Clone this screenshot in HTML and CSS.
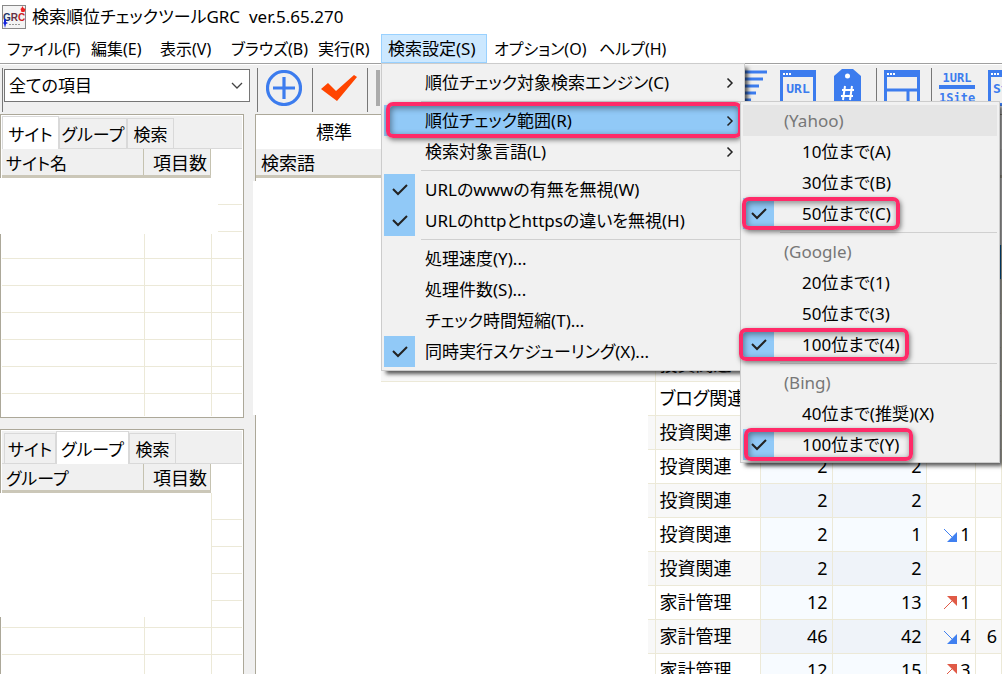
FILE: index.html
```html
<!DOCTYPE html>
<html lang="ja">
<head>
<meta charset="utf-8">
<title>検索順位チェックツールGRC</title>
<link rel="stylesheet" href="styles.css">
</head>
<body>
<div class="app">
  <header class="titlebar">
    <svg class="logo" viewBox="0 0 24 24" aria-hidden="true"><rect x=".5" y=".5" width="23" height="23" fill="#f4f4f4" stroke="#888"/><text x="12" y="16" text-anchor="middle" font-family="Liberation Sans" font-size="10" font-weight="bold"><tspan fill="#236">G</tspan><tspan fill="#643044">R</tspan><tspan fill="#c22">C</tspan></text><path d="M20.500 1l1 2 2 1-1 3h-3l-1-3 1-1z" fill="#e22"/><path d="M2 14h2v3l2 1-2 1-1 4-1-4-1-1 1-1z" fill="#12d"/><path d="M7 19.500h12" stroke="#999" stroke-dasharray="2 1"/></svg>
    <h1 class="title">検索順位チェックツールGRC&nbsp; ver.5.65.270</h1>
  </header>
  <nav class="menubar">
    <button>ファイル(F)</button><button>編集(E)</button><button>表示(V)</button><button>ブラウズ(B)</button><button>実行(R)</button>
    <div class="menu-anchor">
      <button class="open">検索設定(S)</button>
      <div class="popup main-menu">
        <button class="item"><span>順位チェック対象検索エンジン(C)</span><svg class="chev" viewBox="0 0 8 12"><path d="M1.500 1.500L6 6l-4.500 4.500"/></svg></button>
        <hr>
        <div class="menu-anchor">
          <button class="item active marked"><span>順位チェック範囲(R)</span><svg class="chev" viewBox="0 0 8 12"><path d="M1.500 1.500L6 6l-4.500 4.500"/></svg></button>
          <div class="popup sub-menu">
            <button class="item head hover" disabled>(Yahoo)</button>
            <button class="item">10位まで(A)</button>
            <button class="item">30位まで(B)</button>
            <button class="item"><svg class="check" viewBox="0 0 31 31"><path d="M9 15l5 5 9-9"/></svg>50位まで(C)<i class="ring ring-c"></i></button>
            <hr>
            <button class="item head" disabled>(Google)</button>
            <button class="item">20位まで(1)</button>
            <button class="item">50位まで(3)</button>
            <button class="item"><svg class="check" viewBox="0 0 31 31"><path d="M9 15l5 5 9-9"/></svg>100位まで(4)<i class="ring ring-4"></i></button>
            <hr>
            <button class="item head" disabled>(Bing)</button>
            <button class="item">40位まで(推奨)(X)</button>
            <button class="item"><svg class="check" viewBox="0 0 31 31"><path d="M9 15l5 5 9-9"/></svg>100位まで(Y)<i class="ring ring-y"></i></button>
          </div>
        </div>
        <button class="item"><span>検索対象言語(L)</span><svg class="chev" viewBox="0 0 8 12"><path d="M1.500 1.500L6 6l-4.500 4.500"/></svg></button>
        <hr>
        <button class="item"><svg class="check" viewBox="0 0 31 31"><path d="M9 15l5 5 9-9"/></svg>URLのwwwの有無を無視(W)</button>
        <button class="item"><svg class="check" viewBox="0 0 31 31"><path d="M9 15l5 5 9-9"/></svg>URLのhttpとhttpsの違いを無視(H)</button>
        <hr>
        <button class="item">処理速度(Y)...</button>
        <button class="item">処理件数(S)...</button>
        <button class="item">チェック時間短縮(T)...</button>
        <button class="item"><svg class="check" viewBox="0 0 31 31"><path d="M9 15l5 5 9-9"/></svg>同時実行スケジューリング(X)...</button>
      </div>
    </div>
    <button>オプション(O)</button><button>ヘルプ(H)</button>
  </nav>
  <div class="toolbar">
    <div class="combo">
      <select class="filter" aria-label="項目の絞り込み"><option>全ての項目</option></select>
      <svg class="drop" viewBox="0 0 12 8" aria-hidden="true"><path d="M1 1l5 5 5-5"/></svg>
    </div>
    <i class="sep"></i>
    <button class="tool" aria-label="追加"><svg width="36" height="36" viewBox="0 0 36 36" fill="none" stroke="#3c7cee"><circle cx="18" cy="18" r="16.500" stroke-width="3.200"/><path d="M7 18h22M18 7v22" stroke-width="3.200"/></svg></button>
    <i class="sep"></i>
    <button class="tool" aria-label="チェック"><svg width="36" height="36" viewBox="0 0 36 36"><path d="M0 19l7-6 8 8L33 5l3 2-20 24z" fill="#ff4500"/></svg></button>
    <i class="sep"></i><i class="block"></i>
    <div class="tools-right">
      <button class="tool bars" aria-label="並べ替え"><svg width="36" height="36" viewBox="0 0 36 36" stroke="#3c7cee" stroke-width="3"><path d="M0 2h36M0 9h32M0 16h28M0 23h25M0 30h20"/></svg></button>
      <button class="tool url" aria-label="URL"><svg width="36" height="36" viewBox="0 0 36 36"><path d="M1.500 1.500h33v33h-33z" fill="#f0f0f0" stroke="#3c7cee" stroke-width="3"/><path d="M0 0h36v7H0z" fill="#3c7cee"/><path d="M3 3h2v2H3zM6 3h2v2H6zM9 3h2v2H9z" fill="#fff"/><text x="18" y="23" text-anchor="middle" class="glyph">URL</text></svg></button>
      <button class="tool tag" aria-label="タグ"><svg width="27" height="40" viewBox="0 0 27 40"><path d="M8 0h11l8 7v33H0V7z" fill="#3c7cee"/><circle cx="13.500" cy="7" r="2.500" fill="#fff"/><path d="M11 17L9 31M18 17l-2 14M8 21h12M7 27h12" stroke="#fff" stroke-width="2"/></svg></button>
      <i class="sep"></i>
      <button class="tool" aria-label="分割表示"><svg width="36" height="36" viewBox="0 0 36 36"><path d="M1.500 1.500h33v33h-33zM0 20h36M24 20v16" fill="#f0f0f0" stroke="#3c7cee" stroke-width="3"/><path d="M0 0h36v7H0z" fill="#3c7cee"/><path d="M3 3h2v2H3zM6 3h2v2H6zM9 3h2v2H9z" fill="#fff"/></svg></button>
      <i class="sep after-window"></i>
      <button class="tool fraction" aria-label="1URL 1Site"><span>1URL</span><span>1Site</span></button>
      <button class="tool site" aria-label="サイト"><svg width="36" height="36" viewBox="0 0 36 36"><path d="M1.500 1.500h33v33h-33z" fill="#f0f0f0" stroke="#3c7cee" stroke-width="3"/><path d="M0 0h36v7H0z" fill="#3c7cee"/><path d="M3 3h2v2H3zM6 3h2v2H6zM9 3h2v2H9z" fill="#fff"/><text x="5" y="23" class="glyph">St</text></svg></button>
    </div>
  </div>
  <main class="body">
    <aside class="side">
      <section class="panel top">
        <div class="tabs"><button class="tab on">サイト</button><button class="tab wide">グループ</button><button class="tab">検索</button></div>
        <div class="cols"><span>サイト名</span><span class="num">項目数</span></div>
        <div class="grid"><i class="blank"></i></div>
      </section>
      <section class="panel bottom">
        <div class="tabs"><button class="tab first">サイト</button><button class="tab on wide">グループ</button><button class="tab">検索</button></div>
        <div class="cols"><span>グループ</span><span class="num">項目数</span></div>
        <div class="grid"><i class="blank"></i></div>
      </section>
    </aside>
    <section class="content">
      <div class="std">標準</div>
      <div class="word">検索語</div>
      <div class="results">
        <table class="table">
          <colgroup><col class="c0"><col class="c1"><col class="c2"><col class="c3"><col class="c4"><col></colgroup>
          <tr class="selected"><td></td><td></td><td></td><td></td><td></td><td></td></tr>
          <tr><td></td><td></td><td></td><td></td><td></td><td></td></tr>
          <tr><td></td><td></td><td></td><td></td><td></td><td></td></tr>
          <tr class="extended"><td></td><td>投資関連</td><td></td><td></td><td></td><td></td></tr>
          <tr><td></td><td>ブログ関連</td><td></td><td></td><td></td><td></td></tr>
          <tr><td></td><td>投資関連</td><td></td><td></td><td></td><td></td></tr>
          <tr><td></td><td>投資関連</td><td>2</td><td>2</td><td></td><td></td></tr>
          <tr><td></td><td>投資関連</td><td>2</td><td>2</td><td></td><td></td></tr>
          <tr><td></td><td>投資関連</td><td>2</td><td>1</td><td><svg class="arrow" viewBox="0 0 14 14"><path d="M1 1l9 9" stroke="#4080f0"/><path d="M14 4v10H4z" fill="#4080f0"/></svg>1</td><td></td></tr>
          <tr><td></td><td>投資関連</td><td>2</td><td>2</td><td></td><td></td></tr>
          <tr><td></td><td>家計管理</td><td>12</td><td>13</td><td><svg class="arrow" viewBox="0 0 14 14"><path d="M1 13l9-9" stroke="#e05a46"/><path d="M14 10V0H4z" fill="#e05a46"/></svg>1</td><td></td></tr>
          <tr><td></td><td>家計管理</td><td>46</td><td>42</td><td><svg class="arrow" viewBox="0 0 14 14"><path d="M1 1l9 9" stroke="#4080f0"/><path d="M14 4v10H4z" fill="#4080f0"/></svg>4</td><td>6</td></tr>
          <tr><td></td><td>家計管理</td><td>12</td><td>15</td><td><svg class="arrow" viewBox="0 0 14 14"><path d="M1 13l9-9" stroke="#e05a46"/><path d="M14 10V0H4z" fill="#e05a46"/></svg>3</td><td></td></tr>
        </table>
      </div>
    </section>
  </main>
</div>
</body>
</html>
```
FILE: styles.css
```css
* { box-sizing: border-box; }
body { margin: 0; background: #f0f0f0; color: #000; }
body, button, select { font-family: "Noto Sans", "Noto Sans CJK JP", sans-serif; font-size: 17px; font-feature-settings: "palt"; }
button { border: 0; padding: 0; background: none; color: inherit; white-space: nowrap; }
.app { height: 100vh; display: flex; flex-direction: column; overflow: hidden; }

.titlebar { height: 34px; flex: none; background: #fff; display: flex; align-items: center; padding-left: 2px; gap: 6px; }
.logo { width: 24px; height: 24px; }
.title { margin: 0; font-size: 17px; font-weight: 400; line-height: 34px; }

.menubar { height: 30px; flex: none; background: #fff; display: grid; grid-template-columns: 84px 69px 71px 87px 70px 106px 105px 80px; border-bottom: 1px solid #a0a0a0; }
.menubar > button, .open { height: 29px; line-height: 28px; padding: 0 7px; font-size: 16px; text-align: left; }
.open { width: 100%; font-size: 17px; background: #cce8ff; box-shadow: inset 0 0 0 1px #99d1ff; }
.menu-anchor { position: relative; }
.menubar > .menu-anchor { z-index: 2; }

.popup { position: absolute; background: #f1f1f1; border: 1px solid #ccc; box-shadow: 4px 4px 4px -1px rgba(0,0,0,.65); padding: 3px 2px; }
.main-menu { left: 0; top: 29px; width: 364px; }
.sub-menu { left: 356px; top: -4px; width: 260px; padding-bottom: 2px; z-index: 3; }
.item { position: relative; display: flex; align-items: center; justify-content: space-between; width: 100%; height: 31px; line-height: 31px; padding: 0 8px 0 41px; }
.sub-menu .item { justify-content: flex-start; padding-left: 59px; }
.sub-menu .head { padding-left: 41px; color: #777; }
.item.hover { background: #e5e5e5; }
.item.active { background: #91c9f7; }
.popup hr { height: 1px; border: 0; margin: 3px 0 3px 37px; background: #d0d0d0; }
.chev { width: 8px; height: 12px; fill: none; stroke: #222; stroke-width: 1.5; }
.check { position: absolute; left: 0; top: 0; width: 31px; height: 31px; background: #91c9f7; fill: none; stroke: #222; stroke-width: 2; }
.ring, .marked::after { content: ""; position: absolute; border: 4px solid #ff2a68; border-radius: 7px; box-shadow: 1px 2px 5px rgba(0,0,0,.5), inset 1px 2px 6px rgba(0,0,0,.45); }
.marked::after { left: 2px; right: 0; top: -3px; bottom: -2px; }
.ring { top: -1px; height: 33px; }
.ring-c { left: -1px; width: 158px; }
.ring-4 { left: -4px; width: 170px; }
.ring-y { left: 1px; width: 169px; }

.toolbar { height: 50px; flex: none; border-top: 1px solid #fff; padding: 3px 0 0 2px; display: flex; align-items: flex-start; overflow: hidden; }
.toolbar::before { content: ""; width: 1px; height: 44px; background: #777; margin-right: 1px; flex: none; }
.combo { position: relative; flex: none; margin-top: 1px; }
.filter { width: 246px; height: 33px; border: 1px solid #767676; border-radius: 0; padding: 0 4px; appearance: none; color: #000; background: #fff; display: block; }
.drop { position: absolute; right: 7px; top: 13px; width: 12px; height: 8px; fill: none; stroke: #444; stroke-width: 1.3; pointer-events: none; }
.sep { width: 1px; height: 44px; background: #777; flex: none; margin: 0 8px 0 7px; }
.tool { flex: none; width: 36px; height: 36px; margin-top: 2px; display: grid; place-items: center; }
.toolbar > .tool + .sep { margin-left: 10px; }
.block { width: 4px; height: 36px; margin-top: 2px; background: #aaa; }
.tools-right { display: flex; margin-left: auto; margin-right: -22px; }
.bars { margin-right: 13px; }
.url { margin-right: 18px; }
.tag { width: 27px; height: 40px; margin-top: 1px; margin-right: 8px; }
.tools-right .sep { margin-right: 7px; }
.after-window { margin-left: 11px; }
.glyph { font: bold 13px "DejaVu Sans Mono", monospace; fill: #3c7cee; }
.fraction { font: bold 12px/14px "DejaVu Sans Mono", monospace; color: #3c7cee; margin-right: 13px; }
.fraction span:first-child { border-bottom: 4px solid #3c7cee; width: 36px; }

.body { flex: 1; min-height: 0; display: flex; gap: 11px; }
.side { flex: none; width: 244px; display: grid; grid-template-rows: 304px 1fr; gap: 11px; }
.panel { border: 1px solid #aca899; background: #fff; padding: 1px; min-height: 0; display: flex; flex-direction: column; }
.bottom { border-bottom: 0; padding-bottom: 0; }
.tabs { height: 33px; flex: none; background: #f0f0f0; display: flex; align-items: flex-end; border-bottom: 1px solid #d9d9d9; }
.tab { height: 30px; border: 1px solid #d9d9d9; border-bottom: 0; width: 47px; }
.tab.wide { width: 68px; }
.tab.first { width: 52px; margin-left: 2px; }
.tab.on { height: 33px; width: 57px; background: #fff; margin-bottom: -1px; }
.tab.on.wide { width: 73px; }
.cols { width: 209px; height: 29px; flex: none; background: #f0f0f0; border-bottom: 3px solid #cbc7b8; display: flex; line-height: 29px; }
.cols span { width: 142px; height: 26px; padding-left: 4px; border-right: 1px solid #c5c2b0; }
.cols .num { flex: 1; padding-left: 9px; font-size: 18px; }
.grid { flex: 1; min-height: 0; position: relative; background: linear-gradient(90deg, transparent 142px, #ece9d8 142px 143px, transparent 143px 209px, #ece9d8 209px 210px, transparent 210px), repeating-linear-gradient(#fff 0 26px, #ece9d8 26px 27px); }
.blank { position: absolute; left: -2px; top: 0; width: 218px; height: 56px; background: #fff; }
.bottom .blank { width: 211px; height: 124px; }

.content { flex: 1; min-width: 0; background: #fff; border: 1px solid #aca899; border-right: 0; border-bottom: 0; padding-top: 1px; display: flex; flex-direction: column; position: relative; }
.content::before { content: ""; position: absolute; left: -3px; top: 66px; width: 4px; height: 234px; background: #fff; }
.std { height: 33px; flex: none; line-height: 32px; padding-left: 60px; font-size: 18px; }
.word { height: 29px; flex: none; line-height: 29px; padding-left: 5px; font-size: 18px; background: #f0f0f0; border-bottom: 3px solid #cbc7b8; }
.results { flex: 1; min-height: 0; padding-left: 392px; padding-top: 67px; overflow: hidden; }
.table { width: 100%; table-layout: fixed; border-collapse: collapse; font-size: 18px; }
.c0 { width: 7px; }
.c1 { width: 105px; }
.c2 { width: 72px; }
.c3 { width: 94px; }
.c4 { width: 49px; }
td { height: 34px; padding: 0 4px; border-right: 1px solid #ece9d8; border-bottom: 1px solid #ece9d8; text-align: right; white-space: nowrap; line-height: 24px; }
td:nth-child(2) { text-align: left; }
td:first-child { padding: 0; }
tr:nth-child(even) { background: #f8f8f8; }
td:nth-child(3), td:nth-child(4) { background: #f7fbff; }
tr:nth-child(even) td:nth-child(3), tr:nth-child(even) td:nth-child(4) { background: #eff3f9; }
.selected td:last-child { background: #0078d7; }
.extended td:first-child { position: relative; }
.extended td:first-child::before { content: ""; position: absolute; right: 0; top: 0; bottom: -1px; width: 274px; background: #f8f8f8; border-bottom: 1px solid #ece9d8; }
.arrow { width: 14px; height: 14px; vertical-align: -1px; margin-right: 3px; }
```
